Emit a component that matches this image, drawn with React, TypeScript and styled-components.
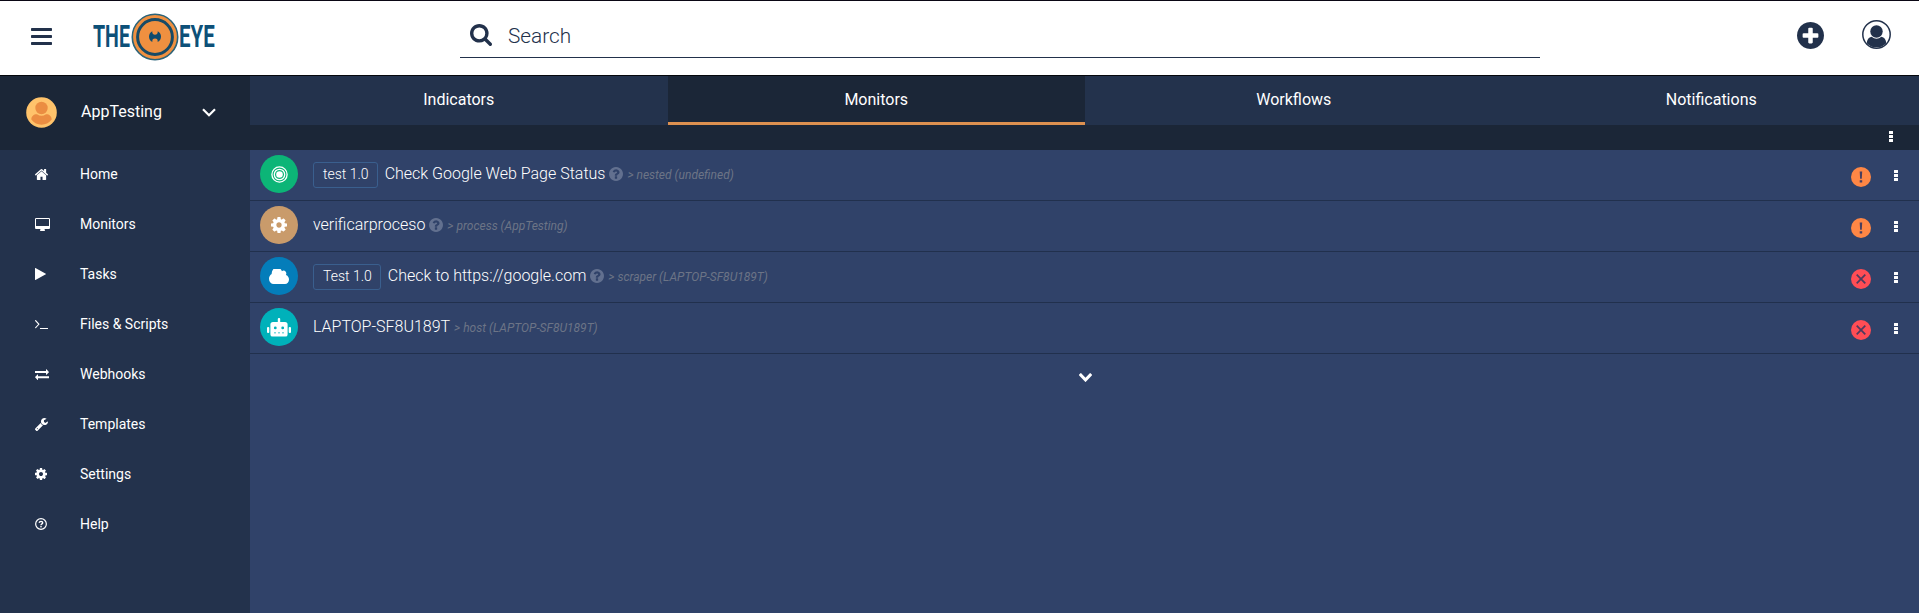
import React from 'react';
import styled, { createGlobalStyle } from 'styled-components';

const GlobalStyle = createGlobalStyle`
  *, *::before, *::after { box-sizing: border-box; }
  html, body, #root { height: 100%; }
  body {
    margin: 0;
    overflow: hidden;
    background: #304269;
    color: #fff;
    font-family: Roboto, "Liberation Sans", sans-serif;
    font-size: 14px;
  }
  svg { display: block; fill: currentColor; flex: none; }
`;

/* ---------- icons ---------- */

const CIRCLE =
  'M1664 896q0 209-103 385.5t-279.5 279.5-385.5 103-385.5-103-279.5-279.5-103-385.5 103-385.5 279.5-279.5 385.5-103 385.5 103 279.5 279.5 103 385.5z';

const icons = {
  home: {
    box: '89 253 1614 1283',
    d: 'M1472 992v480q0 26-19 45t-45 19h-384v-384h-256v384h-384q-26 0-45-19t-19-45v-480q0-1 .5-3t.5-3l575-474 575 474q1 2 1 6zm223-69l-62 74q-8 9-21 11h-3q-13 0-21-7l-692-577-692 577q-12 8-24 7-13-2-21-11l-62-74q-8-10-7-23.5t11-21.5l719-599q32-26 76-26t76 26l244 204v-195q0-14 9-23t23-9h192q14 0 23 9t9 23v408l219 182q10 8 11 21.5t-7 23.5z',
  },
  desktop: {
    box: '-64 0 1920 1664',
    d: 'M1728 992v-832q0-13-9.5-22.5t-22.5-9.5h-1600q-13 0-22.5 9.5t-9.5 22.5v832q0 13 9.5 22.5t22.5 9.5h1600q13 0 22.5-9.5t9.5-22.5zm128-832v1088q0 66-47 113t-113 47h-544q0 37 16 77.5t32 71 16 43.5q0 26-19 45t-45 19h-512q-26 0-45-19t-19-45q0-14 16-44t32-70 16-78h-544q-66 0-113-47t-47-113v-1088q0-66 47-113t113-47h1600q66 0 113 47t47 113z',
  },
  play: {
    box: '192 118 1407 1556',
    d: 'M1576 927l-1328 738q-23 13-39.5 3t-16.5-36v-1472q0-26 16.5-36t39.5 3l1328 738q23 13 23 31t-23 31z',
  },
  terminal: {
    box: '77 461 1651 1075',
    d: 'M649 983l-466 466q-10 10-23 10t-23-10l-50-50q-10-10-10-23t10-23l393-393-393-393q-10-10-10-23t10-23l50-50q10-10 23-10t23 10l466 466q10 10 10 23t-10 23zm1079 457v64q0 14-9 23t-23 9h-960q-14 0-23-9t-9-23v-64q0-14 9-23t23-9h960q14 0 23 9t9 23z',
  },
  exchange: {
    box: '0 256 1792 1376',
    d: 'M1792 1184v192q0 13-9.5 22.5t-22.5 9.5h-1376v192q0 13-9.5 22.5t-22.5 9.5q-12 0-24-10l-319-320q-9-9-9-22 0-14 9-23l320-320q9-9 23-9 13 0 22.5 9.5t9.5 22.5v192h1376q13 0 22.5 9.5t9.5 22.5zm0-544q0 14-9 23l-320 320q-9 9-23 9-13 0-22.5-9.5t-9.5-22.5v-192h-1376q-13 0-22.5-9.5t-9.5-22.5v-192q0-13 9.5-22.5t22.5-9.5h1376v-192q0-14 9-23t23-9q12 0 24 10l319 319q9 9 9 23z',
  },
  wrench: {
    box: '85 128 1641 1643',
    d: 'M448 1472q0-26-19-45t-45-19-45 19-19 45 19 45 45 19 45-19 19-45zm644-420l-682 682q-37 37-90 37-52 0-91-37l-106-108q-38-36-38-90 0-53 38-91l681-681q39 98 114.5 173.5t173.5 114.5zm634-435q0 39-23 106-47 134-164.5 217.5t-258.5 83.5q-185 0-316.5-131.5t-131.5-316.5 131.5-316.5 316.5-131.5q58 0 121.5 16.5t107.5 46.5q16 11 16 28t-16 28l-293 169v224l193 107q5-3 79-48.5t135.5-81 70.5-35.5q15 0 23.5 10t8.5 25z',
  },
  cog: {
    box: '128 128 1536 1536',
    d: 'M1152 896q0-106-75-181t-181-75-181 75-75 181 75 181 181 75 181-75 75-181zm512-109v222q0 12-8 23t-20 13l-185 28q-19 54-39 91 35 50 107 138 10 12 10 25t-9 23q-27 37-99 108t-94 71q-12 0-26-9l-138-108q-44 23-91 38-16 136-29 186-7 28-36 28h-222q-14 0-24.5-8.5t-11.5-21.5l-28-184q-49-16-90-37l-141 107q-10 9-25 9-14 0-25-11-126-114-165-168-7-10-7-23 0-12 8-23 15-21 51-66.5t54-70.5q-27-50-41-99l-183-27q-13-2-21-12.5t-8-23.5v-222q0-12 8-23t19-13l186-28q14-46 39-92-40-57-107-138-10-12-10-24 0-10 9-23 26-36 98.5-107.5t94.5-71.5q13 0 26 10l138 107q44-23 91-38 16-136 29-186 7-28 36-28h222q14 0 24.5 8.5t11.5 21.5l28 184q49 16 90 37l142-107q9-9 24-9 13 0 25 10 129 119 165 170 7 8 7 22 0 12-8 23-15 21-51 66.5t-54 70.5q26 50 41 98l183 28q13 2 21 12.5t8 23.5z',
  },
  question: {
    box: '128 128 1536 1536',
    d:
      'M1024 1376v-192q0-14-9-23t-23-9h-192q-14 0-23 9t-9 23v192q0 14 9 23t23 9h192q14 0 23-9t9-23zm256-672q0-88-55.5-163t-138.5-116-170-41q-243 0-371 213-15 24 8 42l132 100q7 6 19 6 16 0 25-12 53-68 86-92 34-24 86-24 48 0 85.5 26t37.5 59q0 38-20 61t-68 45q-63 28-115.5 86.5t-52.5 125.5v36q0 14 9 23t23 9h192q14 0 23-9t9-23q0-19 21.5-49.5t54.5-49.5q32-18 49-28.5t46-35 44.5-48 28-60.5 12.5-81z' +
      CIRCLE,
  },
  search: {
    box: '64 128 1664 1664',
    d: 'M1216 832q0-185-131.5-316.5t-316.5-131.5-316.5 131.5-131.5 316.5 131.5 316.5 316.5 131.5 316.5-131.5 131.5-316.5zm512 832q0 52-38 90t-90 38q-54 0-90-38l-343-342q-179 124-399 124-143 0-273.5-55.5t-225-150-150-225-55.5-273.5 55.5-273.5 150-225 225-150 273.5-55.5 273.5 55.5 225 150 150 225 55.5 273.5q0 220-124 399l343 343q37 37 37 90z',
  },
  plus: {
    box: '128 128 1536 1536',
    d:
      'M1344 960v-128q0-26-19-45t-45-19h-256v-256q0-26-19-45t-45-19h-128q-26 0-45 19t-19 45v256h-256q-26 0-45 19t-19 45v128q0 26 19 45t45 19h256v256q0 26 19 45t45 19h128q26 0 45-19t19-45v-256h256q26 0 45-19t19-45z' +
      CIRCLE,
  },
  chevron: {
    box: '90 533 1612 1035',
    d: 'M1683 808l-742 741q-19 19-45 19t-45-19l-742-741q-19-19-19-45.5t19-45.5l166-165q19-19 45-19t45 19l531 531 531-531q19-19 45-19t45 19l166 165q19 19 19 45.5t-19 45.5z',
  },
  cloud: {
    box: '64 256 1920 1280',
    d: 'M1984 1152q0 159-112.5 271.5t-271.5 112.5h-1088q-185 0-316.5-131.5t-131.5-316.5q0-132 71-241.5t187-163.5q-2-28-2-43 0-212 150-362t362-150q158 0 286.5 88t187.5 230q70-62 166-62 106 0 181 75t75 181q0 75-41 138 129 30 213 134.5t84 239.5z',
  },
};

type IconName = keyof typeof icons;

const Icon = ({ name, w, h = w }: { name: IconName; w: number; h?: number }) => (
  <svg width={w} height={h} viewBox={icons[name].box} preserveAspectRatio="none" fillRule="evenodd">
    <path d={icons[name].d} />
  </svg>
);

const HelpOutline = () => (
  <svg width="12" height="12" viewBox="0 0 12 12">
    <circle cx="6" cy="6" r="5.35" fill="none" stroke="currentColor" strokeWidth="1.2" />
    <path
      d="M4.1 4.7Q4.5 3.4 6 3.4Q7.7 3.5 7.7 4.8Q7.6 5.6 6.7 6Q6 6.4 6 7.2"
      fill="none"
      stroke="currentColor"
      strokeWidth="1.4"
    />
    <rect x="5.3" y="8" width="1.4" height="1.4" />
  </svg>
);

const Dots = () => (
  <svg width="4" height="11" viewBox="0 0 4 11">
    <rect width="4" height="3" rx=".3" />
    <rect y="4" width="4" height="3" rx=".3" />
    <rect y="8" width="4" height="3" rx=".3" />
  </svg>
);

const Bars = () => (
  <svg width="21" height="17" viewBox="0 0 21 17">
    <rect width="21" height="3" rx=".7" />
    <rect y="7" width="21" height="3" rx=".7" />
    <rect y="14" width="21" height="3" rx=".7" />
  </svg>
);

const Target = () => (
  <svg width="17" height="17" viewBox="0 0 17 17">
    <g fill="none" stroke="currentColor">
      <circle cx="8.5" cy="8.5" r="7.6" strokeWidth="1.3" />
      <circle cx="8.5" cy="8.5" r="5.2" strokeWidth="1.3" />
    </g>
    <circle cx="8.5" cy="8.5" r="3.3" />
  </svg>
);

const Robot = () => (
  <svg width="24" height="19" viewBox="0 0 24 19">
    <rect x="10.8" y="0" width="2.4" height="5" rx="1" />
    <rect x="0" y="9" width="2.3" height="6" rx="1" />
    <rect x="21.7" y="9" width="2.3" height="6" rx="1" />
    <path
      fillRule="evenodd"
      d="M6 4h12a2.6 2.6 0 0 1 2.6 2.6V16.4a2.2 2.2 0 0 1-2.2 2.2H5.6a2.2 2.2 0 0 1-2.2-2.2V6.6A2.6 2.6 0 0 1 6 4zM8.3 8.5a1.4 1.4 0 1 0 0 2.8a1.4 1.4 0 1 0 0-2.8zM15.7 8.5a1.4 1.4 0 1 0 0 2.8a1.4 1.4 0 1 0 0-2.8zM7 14.5h2v.7H7zM11 14.5h2v.7h-2zM15 14.5h2v.7h-2z"
    />
  </svg>
);

const Profile = () => (
  <svg width="29" height="29" viewBox="0 0 29 29">
    <circle cx="14.5" cy="14.5" r="13.7" fill="#fff" stroke="#22314b" strokeWidth="1.5" />
    <path d="M4.7 23.2Q5.2 17.3 9.6 16.7Q14.5 20.8 19.4 16.7Q23.8 17.3 24.3 23.2A13.6 13.6 0 0 1 4.7 23.2z" />
    <circle cx="14.5" cy="11.5" r="6.2" />
  </svg>
);

const Avatar = () => (
  <svg width="31" height="31" viewBox="0 0 31 31">
    <circle cx="15.5" cy="15.5" r="15.3" fill="#ffc36b" />
    <g fill="#eb8d42">
      <circle cx="15.5" cy="11" r="6.2" />
      <path d="M5.3 22.5C5.3 19 8 17 11 17.2Q15.5 20.2 20 17.2C23 17 25.7 19 25.7 22.5Q21.5 27.7 15.5 27.7Q9.5 27.7 5.3 22.5z" />
    </g>
  </svg>
);

const EyeMark = () => (
  <svg width="48" height="48" viewBox="0 0 48 48">
    <circle cx="24" cy="24" r="22.7" fill="#ef9040" stroke="#2b6379" strokeWidth="1.6" />
    <circle cx="24" cy="24" r="17.4" fill="none" stroke="#174a66" strokeWidth="3" />
    <path
      fill="#0e4b6e"
      d="M21.3 18.3Q21 21.7 24 21.7Q27 21.7 26.7 18.3Q30 20.3 30 23.5Q30 27 26.7 29Q27 25.6 24 25.6Q21 25.6 21.3 29Q18 27 18 23.5Q18 20.3 21.3 18.3z"
    />
  </svg>
);

const Warning = () => (
  <svg width="20" height="20" viewBox="0 0 20 20">
    <circle cx="10" cy="10" r="10" fill="#ff8745" />
    <path fill="#4a3f5e" d="M8.7 4.5h2.5l-.4 7.2h-1.7zM8.7 13.2h2.5v2.3H8.7z" />
  </svg>
);

const Failure = () => (
  <svg width="20" height="20" viewBox="0 0 20 20">
    <circle cx="10" cy="10" r="10" fill="#ff4d55" />
    <path fill="none" stroke="#4e3a5e" strokeWidth="1.7" d="M5.7 5.7l8.6 8.6M14.3 5.7l-8.6 8.6" />
  </svg>
);

/* ---------- layout ---------- */

const Page = styled.div`
  display: flex;
  flex-direction: column;
  height: 100%;
`;

const Header = styled.header`
  display: flex;
  align-items: flex-start;
  height: 76px;
  border-top: 1px solid #0a0714;
  border-bottom: 1px solid #05070c;
  background: #fff;
  color: #22314b;
`;

const MenuButton = styled.div`
  width: 93px;
  padding: 27px 0 0 31px;
`;

const Logo = styled.div`
  display: flex;
  align-items: flex-start;
  width: 367px;
  padding-top: 12px;
  color: #0d5078;
`;

const LogoWord = styled.span<{ $width: number; $scale: number }>`
  width: ${(p) => p.$width}px;
  height: 48px;
  line-height: 47px;
  font-size: 31px;
  font-weight: 700;
  white-space: nowrap;

  span {
    display: inline-block;
    transform: scaleX(${(p) => p.$scale});
    transform-origin: 0 50%;
  }
`;

const SearchBar = styled.div`
  display: flex;
  align-items: flex-start;
  gap: 16px;
  width: 1080px;
  height: 57px;
  padding: 23px 0 0 10px;
  border-bottom: 1px solid #22314b;
`;

const SearchText = styled.span`
  font-size: 20.8px;
  font-weight: 300;
  line-height: 24px;
`;

const HeaderActions = styled.div`
  display: flex;
  gap: 38px;
  margin: 19px 28px 0 auto;

  svg:first-child { margin-top: 2px; }
`;

const Body = styled.div`
  display: flex;
  flex: 1;
  min-height: 0;
`;

const Sidebar = styled.aside`
  width: 250px;
  background: #23324c;
`;

const Account = styled.div`
  display: flex;
  align-items: center;
  height: 74px;
  padding: 0 34px 2px 26px;
  background: #1b2637;
  font-size: 16px;
`;

const AccountName = styled.span`
  flex: 1;
  padding-left: 24px;
  line-height: 20px;
`;

const NavItem = styled.div`
  display: flex;
  align-items: center;
  height: 50px;
  padding: 0 0 2px 35px;
  line-height: 20px;
`;

const NavIcon = styled.span`
  width: 45px;
`;

const Main = styled.main`
  flex: 1;
  background: #304269;
`;

const Tabs = styled.nav`
  display: flex;
  margin-right: -1px;
  background: #23324c;
`;

const Tab = styled.div<{ $active: boolean }>`
  flex: 1;
  height: 49px;
  border-bottom: 3px solid ${(p) => (p.$active ? '#dc9050' : 'transparent')};
  background: ${(p) => (p.$active ? '#1b2637' : 'transparent')};
  font-size: 16px;
  line-height: 48px;
  text-align: center;
`;

const Toolbar = styled.div`
  display: flex;
  justify-content: flex-end;
  height: 25px;
  padding: 6px 26px 0 0;
  background: #1b2637;
`;

const Row = styled.div`
  display: flex;
  align-items: flex-start;
  height: 51px;
  padding: 5px 21px 0 10px;
  border-bottom: 1px solid #21304d;
`;

const KindBadge = styled.div<{ $color: string }>`
  display: flex;
  align-items: center;
  justify-content: center;
  width: 38px;
  height: 38px;
  margin-right: 15px;
  border-radius: 50%;
  background: ${(p) => p.$color};
`;

const RowText = styled.div`
  display: flex;
  flex: 1;
  align-items: center;
  height: 38px;
  font-weight: 300;
`;

const Tag = styled.span`
  height: 26px;
  margin: 2px 7px 0 0;
  padding: 0 8px 0 9px;
  border: 1px solid #3a5f8e;
  border-radius: 3px;
  line-height: 23px;
`;

const Title = styled.span`
  margin-right: 4px;
  font-size: 16px;
  line-height: 38px;
`;

const Hint = styled.span`
  margin-right: 4px;
  color: #62708f;
`;

const Meta = styled.span`
  padding-top: 1px;
  color: #6c7486;
  font-size: 12px;
  font-style: italic;
  font-weight: 400;
`;

const RowStatus = styled.div`
  display: flex;
  gap: 23px;
  padding-top: 12px;

  svg:last-child { margin-top: 3px; }
`;

const LoadMore = styled.div`
  display: flex;
  justify-content: center;
  padding: 19px 0 0 1px;
`;

/* ---------- content ---------- */

const navItems = [
  { label: 'Home', icon: <Icon name="home" w={13} h={11} /> },
  { label: 'Monitors', icon: <Icon name="desktop" w={15} h={13} /> },
  { label: 'Tasks', icon: <Icon name="play" w={11} h={12} /> },
  { label: 'Files & Scripts', icon: <Icon name="terminal" w={13} h={9} /> },
  { label: 'Webhooks', icon: <Icon name="exchange" w={14} h={11} /> },
  { label: 'Templates', icon: <Icon name="wrench" w={13} /> },
  { label: 'Settings', icon: <Icon name="cog" w={12} /> },
  { label: 'Help', icon: <HelpOutline /> },
];

const tabs = ['Indicators', 'Monitors', 'Workflows', 'Notifications'];

const monitors = [
  { tag: 'test 1.0', title: 'Check Google Web Page Status', hint: true, meta: '> nested (undefined)', color: '#0cb577', icon: <Target />, ok: true },
  { title: 'verificarproceso', hint: true, meta: '> process (AppTesting)', color: '#c99b6b', icon: <Icon name="cog" w={16} />, ok: true },
  { tag: 'Test 1.0', title: 'Check to https://google.com', hint: true, meta: '> scraper (LAPTOP-SF8U189T)', color: '#047dba', icon: <Icon name="cloud" w={20} h={15} />, ok: false },
  { title: 'LAPTOP-SF8U189T', hint: false, meta: '> host (LAPTOP-SF8U189T)', color: '#00b1ba', icon: <Robot />, ok: false },
];

export default function App() {
  return (
    <Page>
      <GlobalStyle />
      <Header>
        <MenuButton><Bars /></MenuButton>
        <Logo>
          <LogoWord $width={38} $scale={0.63}><span>THE</span></LogoWord>
          <EyeMark />
          <LogoWord $width={38} $scale={0.66}><span>EYE</span></LogoWord>
        </Logo>
        <SearchBar>
          <Icon name="search" w={22} />
          <SearchText>Search</SearchText>
        </SearchBar>
        <HeaderActions>
          <Icon name="plus" w={27} />
          <Profile />
        </HeaderActions>
      </Header>
      <Body>
        <Sidebar>
          <Account>
            <Avatar />
            <AccountName>AppTesting</AccountName>
            <svg width="14" height="9" viewBox="0 0 14 9">
              <path d="M1 1.2L7 7.2L13 1.2" fill="none" stroke="#fff" strokeWidth="2.2" />
            </svg>
          </Account>
          {navItems.map((item) => (
            <NavItem key={item.label}>
              <NavIcon>{item.icon}</NavIcon>
              {item.label}
            </NavItem>
          ))}
        </Sidebar>
        <Main>
          <Tabs>
            {tabs.map((tab) => (
              <Tab key={tab} $active={tab === 'Monitors'}>{tab}</Tab>
            ))}
          </Tabs>
          <Toolbar><Dots /></Toolbar>
          {monitors.map((m) => (
            <Row key={m.title}>
              <KindBadge $color={m.color}>{m.icon}</KindBadge>
              <RowText>
                {m.tag && <Tag>{m.tag}</Tag>}
                <Title>{m.title}</Title>
                {m.hint && <Hint><Icon name="question" w={14} /></Hint>}
                <Meta>{m.meta}</Meta>
              </RowText>
              <RowStatus>
                {m.ok ? <Warning /> : <Failure />}
                <Dots />
              </RowStatus>
            </Row>
          ))}
          <LoadMore><Icon name="chevron" w={13} h={9} /></LoadMore>
        </Main>
      </Body>
    </Page>
  );
}
